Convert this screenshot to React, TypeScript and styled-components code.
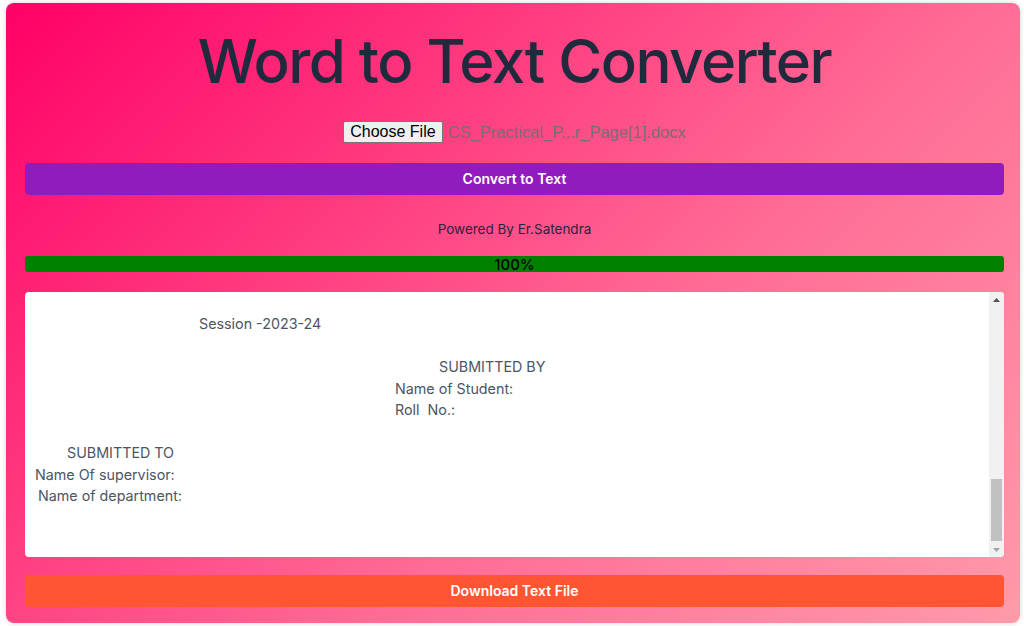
import React, { useLayoutEffect, useRef } from 'react';
import styled, { createGlobalStyle } from 'styled-components';

const GlobalStyle = createGlobalStyle`
  html, body {
    margin: 0;
    padding: 0;
    background: #ffffff;
    font-family: Inter, "Noto Sans", sans-serif;
  }
`;

const Page = styled.div`
  padding: 3px 4px 3px 6px;
  height: 626px;
  box-sizing: border-box;
`;

const Card = styled.div`
  height: 100%;
  box-sizing: border-box;
  border-radius: 8px;
  background: linear-gradient(135deg, #ff0066 0%, #ff6b95 60%, #ff9aaa 100%);
  box-shadow: 0 0 5px rgba(0, 0, 0, 0.18);
  padding: 22px 16px 16px 19px;
  display: flex;
  flex-direction: column;
`;

const Title = styled.h1`
  margin: 0;
  text-align: center;
  font-size: 60px;
  line-height: 72px;
  font-weight: 500;
  letter-spacing: -1.5px;
  color: #1f2a3c;
`;

const FileRow = styled.div`
  margin-top: 24px;
  display: flex;
  justify-content: center;
  align-items: center;
  gap: 5px;
  height: 22px;
  font-family: "Liberation Sans", Arial, sans-serif;
  font-size: 16px;
`;

const ChooseButton = styled.button`
  font-family: inherit;
  font-size: 16px;
  height: 22px;
  padding: 0 6px;
  color: #000;
  background: #efefef;
  border: 1px solid #767676;
  border-radius: 2px;
`;

const FileName = styled.span`
  color: #7a6d70;
  font-size: 16.5px;
`;

const ActionButton = styled.button<{ $bg: string; $top: number }>`
  margin-top: ${(p) => p.$top}px;
  height: 32px;
  width: 100%;
  padding: 0 0 2px;
  border: none;
  border-radius: 4px;
  background: ${(p) => p.$bg};
  color: #ffffff;
  font-family: Inter, "Noto Sans", sans-serif;
  font-size: 14px;
  font-weight: 600;
`;

const Powered = styled.p`
  margin: 24px 0 0;
  text-align: center;
  font-size: 13.5px;
  line-height: 20px;
  color: #2a2438;
`;

const Progress = styled.div`
  margin-top: 17px;
  height: 16px;
  border-radius: 3px;
  background: #008000;
  display: flex;
  align-items: center;
  justify-content: center;
  font-size: 15px;
  font-weight: 500;
  color: #000;
`;

const Output = styled.div`
  margin-top: 20px;
  height: 265px;
  display: flex;
  background: #ffffff;
  border-radius: 4px;
  overflow: hidden;
`;

const OutputText = styled.div`
  flex: 1;
  box-sizing: border-box;
  padding: 0 0 7px 10px;
  overflow: hidden;
  font-size: 14.3px;
  line-height: 21.5px;
  color: #4b5563;
`;

const Line = styled.div<{ $indent?: number }>`
  white-space: pre;
  min-height: 21.5px;
  padding-left: ${(p) => p.$indent ?? 0}px;
`;

const ScrollBar = styled.div`
  width: 15px;
  display: flex;
  flex-direction: column;
  background: #f1f1f1;
`;

const ScrollArrow = styled.div`
  height: 15px;
  display: flex;
  align-items: center;
  justify-content: center;
`;

const ScrollTrack = styled.div`
  flex: 1;
  display: flex;
  flex-direction: column;
  justify-content: flex-end;
  padding: 0 2px 1px;
`;

const ScrollThumb = styled.div<{ $size: number }>`
  height: ${(p) => p.$size}px;
  background: #c1c1c1;
`;

const blank: [string, number] = ['', 0];

// the document is long, the box shows its tail (scrolled to the bottom)
const lines: [string, number][] = [
  ...Array.from({ length: 34 }, () => blank),
  ['Session -2023-24', 164],
  blank,
  ['SUBMITTED BY', 404],
  ['Name of Student:', 360],
  ['Roll  No.:', 360],
  blank,
  ['SUBMITTED TO', 32],
  ['Name Of supervisor:', 0],
  ['Name of department:', 3],
  blank,
  blank,
];

export default function App() {
  const outRef = useRef<HTMLDivElement>(null);

  useLayoutEffect(() => {
    if (outRef.current) outRef.current.scrollTop = outRef.current.scrollHeight;
  }, []);

  return (
    <>
      <GlobalStyle />
      <Page>
        <Card>
          <Title>Word to Text Converter</Title>
          <FileRow>
            <ChooseButton>Choose File</ChooseButton>
            <FileName>CS_Practical_P...r_Page[1].docx</FileName>
          </FileRow>
          <ActionButton $bg="#921bbd" $top={20}>Convert to Text</ActionButton>
          <Powered>Powered By Er.Satendra</Powered>
          <Progress>100%</Progress>
          <Output>
            <OutputText ref={outRef}>
              {lines.map(([text, indent], i) => (
                <Line key={i} $indent={indent}>{text}</Line>
              ))}
            </OutputText>
            <ScrollBar>
              <ScrollArrow>
                <svg width="7" height="4" viewBox="0 0 7 4"><path d="M0 4 L3.5 0 L7 4 Z" fill="#505050" /></svg>
              </ScrollArrow>
              <ScrollTrack>
                <ScrollThumb $size={62} />
              </ScrollTrack>
              <ScrollArrow>
                <svg width="7" height="4" viewBox="0 0 7 4"><path d="M0 0 L3.5 4 L7 0 Z" fill="#a3a3a3" /></svg>
              </ScrollArrow>
            </ScrollBar>
          </Output>
          <ActionButton $bg="#ff5533" $top={18}>Download Text File</ActionButton>
        </Card>
      </Page>
    </>
  );
}
